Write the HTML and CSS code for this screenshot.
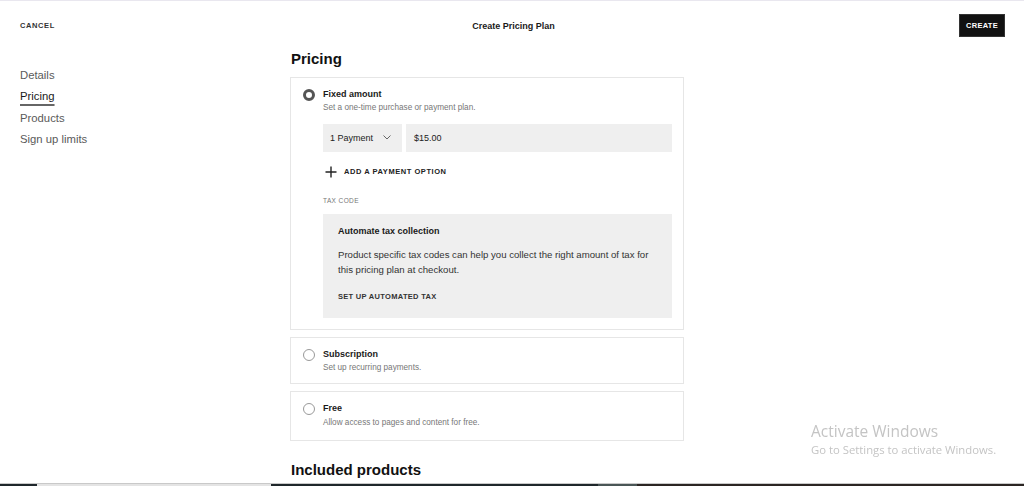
FILE: index.html
```html
<!DOCTYPE html>
<html lang="en">
<head>
<meta charset="utf-8">
<title>Create Pricing Plan</title>
<link rel="stylesheet" href="styles.css">
</head>
<body>
<div class="page">
  <header class="topbar">
    <a class="cancel">CANCEL</a>
    <div class="title">Create Pricing Plan</div>
    <div class="actions"><button class="create">CREATE</button></div>
  </header>
  <div class="layout">
    <nav class="sidebar">
      <a class="nav-item">Details</a>
      <a class="nav-item active">Pricing</a>
      <a class="nav-item">Products</a>
      <a class="nav-item">Sign up limits</a>
    </nav>
    <main class="main">
      <h2 class="section-title">Pricing</h2>

      <section class="card card-fixed">
        <div class="option">
          <span class="radio checked"></span>
          <div class="option-text">
            <div class="option-title">Fixed amount</div>
            <div class="option-sub">Set a one-time purchase or payment plan.</div>
          </div>
        </div>
        <div class="option-body">
          <div class="price-row">
            <div class="select">
              <span>1 Payment</span>
              <svg class="chev" width="8" height="5" viewBox="0 0 8 5"><path d="M0.5 0.5l3.5 3.5L7.5 0.5" fill="none" stroke="#666" stroke-width="1"/></svg>
            </div>
            <div class="amount">$15.00</div>
          </div>
          <div class="add-option">
            <svg width="12" height="12" viewBox="0 0 12 12"><path d="M6 0.5v11M0.5 6h11" stroke="#222" stroke-width="1.4"/></svg>
            <span>ADD A PAYMENT OPTION</span>
          </div>
          <div class="label">TAX CODE</div>
          <div class="tax-box">
            <div class="tax-title">Automate tax collection</div>
            <p class="tax-text">Product specific tax codes can help you collect the right amount of tax for this pricing plan at checkout.</p>
            <div class="tax-link">SET UP AUTOMATED TAX</div>
          </div>
        </div>
      </section>

      <section class="card card-sub">
        <div class="option">
          <span class="radio"></span>
          <div class="option-text">
            <div class="option-title">Subscription</div>
            <div class="option-sub">Set up recurring payments.</div>
          </div>
        </div>
      </section>

      <section class="card card-free">
        <div class="option">
          <span class="radio"></span>
          <div class="option-text">
            <div class="option-title">Free</div>
            <div class="option-sub gap">Allow access to pages and content for free.</div>
          </div>
        </div>
      </section>

      <h2 class="section-title included">Included products</h2>
    </main>
  </div>
</div>

<div class="watermark">
  <div class="wm-title">Activate Windows</div>
  <div class="wm-sub">Go to Settings to activate Windows.</div>
</div>

<div class="taskbar">
  <span class="tb dark w37"></span>
  <span class="tb light w234"></span>
  <span class="tb dark w327"></span>
  <span class="tb mid w39"></span>
  <span class="tb brown grow"></span>
</div>
</body>
</html>
```
FILE: styles.css
```css
* { box-sizing: border-box; }
html, body { margin: 0; padding: 0; }
body {
  font-family: "Liberation Sans", Arial, sans-serif;
  color: #1a1a1a;
  background: #fff;
  height: 486px;
  overflow: hidden;
}
.page { border-top: 1px solid #e9e7ef; }

.topbar {
  display: grid;
  grid-template-columns: 1fr auto 1fr;
  align-items: center;
  height: 49px;
  padding: 0 19px 0 20px;
}
.cancel {
  font-size: 7.5px;
  font-weight: 700;
  letter-spacing: 0.6px;
  color: #333;
}
.title {
  font-size: 9px;
  font-weight: 700;
  color: #1a1a1a;
  padding-left: 2px;
}
.actions { display: flex; justify-content: flex-end; }
.create {
  background: #111;
  color: #fff;
  border: 1px solid #333;
  font-family: inherit;
  font-size: 7.5px;
  font-weight: 700;
  letter-spacing: 0.3px;
  height: 23px;
  width: 46px;
  padding: 0;
}

.layout { display: flex; }
.sidebar {
  width: 290px;
  padding: 15px 0 0 20px;
  display: flex;
  flex-direction: column;
  align-items: flex-start;
}
.nav-item {
  font-size: 11.3px;
  line-height: 21.3px;
  color: #5a5a5a;
}
.nav-item.active {
  color: #1a1a1a;
  text-decoration: underline;
  text-decoration-color: #666;
  text-decoration-thickness: 2px;
  text-underline-offset: 4px;
}

.main { width: 394px; }
.section-title {
  margin: 0 0 9px 1px;
  font-size: 15px;
  line-height: 18px;
  font-weight: 700;
  color: #111;
}
.section-title.included { margin-top: 20px; }

.card {
  border: 1px solid #e6e6e6;
  padding: 10px 11px 12px 12px;
  margin-bottom: 7px;
}
.card-fixed { padding-top: 10px; padding-bottom: 11px; }
.card-sub { padding-top: 10px; padding-bottom: 10px; }
.card-free { margin-bottom: 0; padding-bottom: 12px; }
.option { display: flex; align-items: flex-start; gap: 8px; }
.radio {
  width: 12px;
  height: 12px;
  border-radius: 50%;
  border: 1px solid #999;
  margin-top: 1px;
  flex: none;
}
.radio.checked { border: 3.5px solid #555; }
.option-title {
  font-size: 9px;
  line-height: 12px;
  font-weight: 700;
  color: #1a1a1a;
}
.option-sub {
  font-size: 8.2px;
  line-height: 11px;
  color: #777;
  margin-top: 1.5px;
}
.option-sub.gap { margin-top: 3.5px; }

.option-body { padding-left: 20px; }
.price-row {
  display: flex;
  gap: 4px;
  margin-top: 11px;
  height: 28px;
}
.select, .amount {
  background: #efefef;
  font-size: 9px;
  color: #222;
  display: flex;
  align-items: center;
}
.select {
  width: 79px;
  padding: 0 11px 0 7px;
  justify-content: space-between;
}
.amount { flex: 1; padding-left: 8px; }
.add-option {
  display: flex;
  align-items: center;
  gap: 7px;
  height: 20px;
  margin-top: 10px;
  padding-left: 2px;
  font-size: 7.5px;
  font-weight: 700;
  letter-spacing: 0.55px;
  color: #222;
}
.label {
  margin-top: 14px;
  font-size: 6.5px;
  line-height: 10px;
  letter-spacing: 0.4px;
  color: #777;
}
.tax-box {
  margin-top: 8px;
  background: #efefef;
  padding: 11px 15px 16px 15px;
}
.tax-title {
  font-size: 9px;
  line-height: 12px;
  font-weight: 700;
  color: #1a1a1a;
}
.tax-text {
  margin: 10.5px 0 0;
  font-size: 9.6px;
  line-height: 15px;
  color: #333;
  max-width: 322px;
}
.tax-link {
  margin-top: 14px;
  font-size: 7.5px;
  line-height: 11px;
  font-weight: 700;
  letter-spacing: 0.3px;
  color: #333;
}

.watermark {
  position: fixed;
  left: 811px;
  top: 421px;
  font-family: "Open Sans", "DejaVu Sans", sans-serif;
  color: #c4c4c4;
}
.wm-title { font-size: 15.5px; line-height: 20px; }
.wm-sub { font-size: 11.3px; line-height: 16px; margin-top: 1px; }

.taskbar {
  position: fixed;
  left: 0;
  bottom: 0;
  width: 1024px;
  height: 3px;
  display: flex;
  border-top: 1px solid #c9c9c9;
}
.tb { display: block; height: 100%; }
.dark { background: #1f272b; }
.light { background: #e4e4e4; }
.mid { background: #4a5656; }
.brown { background: #2b2523; }
.w37 { width: 37px; }
.w234 { width: 234px; }
.w327 { width: 327px; }
.w39 { width: 39px; }
.grow { flex: 1; }
```
